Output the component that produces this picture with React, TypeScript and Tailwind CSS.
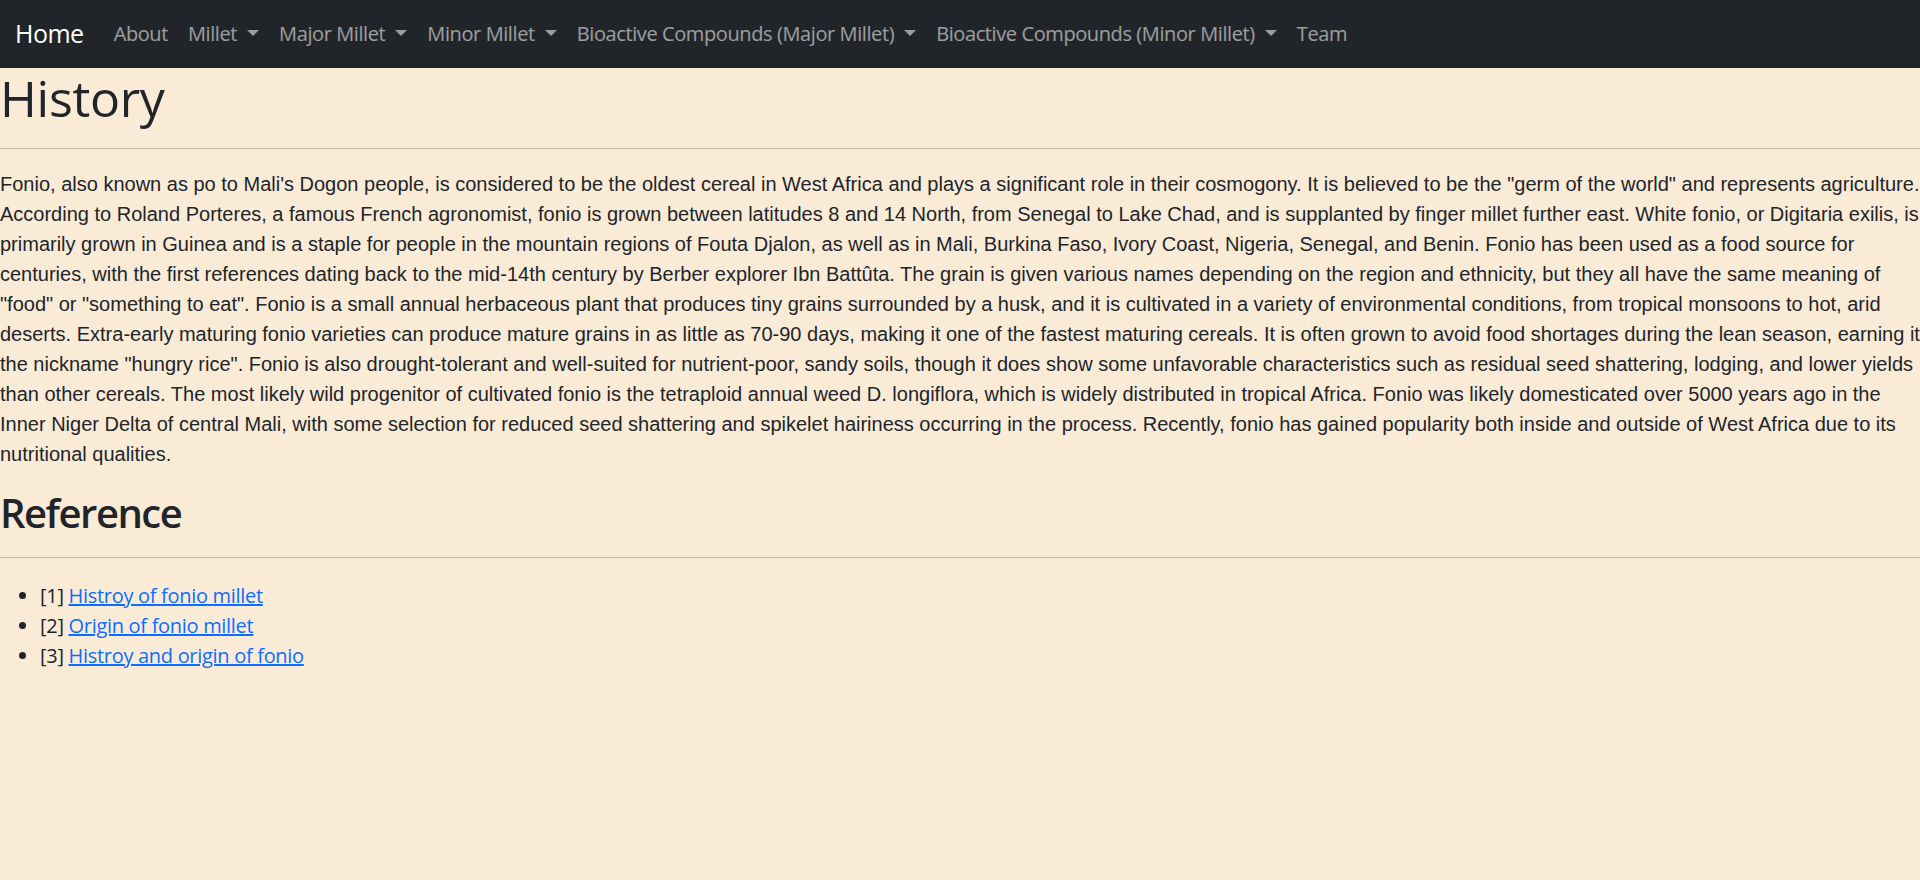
const navItems = [
  { label: "About", dropdown: false },
  { label: "Millet", dropdown: true },
  { label: "Major Millet", dropdown: true },
  { label: "Minor Millet", dropdown: true },
  { label: "Bioactive Compounds (Major Millet)", dropdown: true },
  { label: "Bioactive Compounds (Minor Millet)", dropdown: true },
  { label: "Team", dropdown: false },
];

const references = [
  { id: 1, title: "Histroy of fonio millet" },
  { id: 2, title: "Origin of fonio millet" },
  { id: 3, title: "Histroy and origin of fonio" },
];

const Caret = () => (
  <span className="inline-block ml-[10px] align-[5px] w-0 h-0 border-t-[6px] border-x-[6px] border-b-0 border-t-current border-x-transparent" />
);

const App = () => {
  return (
    <div className="min-h-screen bg-[#faebd7] text-[#212529] font-['Open_Sans',sans-serif] overflow-x-hidden">
      <nav className="h-[68px] bg-[#212529] flex items-center px-[15px]">
        <a href="#" className="text-[25px] leading-[1.5] tracking-[-0.5px] text-white mr-[20px] py-[6px]">
          Home
        </a>
        <ul className="flex items-center">
          {navItems.map(item => (
            <li key={item.label}>
              <a href="#" className="block px-[10px] py-[10px] text-[20px] leading-[30px] tracking-[-0.4px] text-white/55">
                {item.label}
                {item.dropdown && <Caret />}
              </a>
            </li>
          ))}
        </ul>
      </nav>

      <h1 className="text-[50px] leading-[1.2] font-normal tracking-[-0.3px]">History</h1>
      <hr className="my-5 border-[#212529]/25" />
      <p className="font-['Liberation_Sans',Arial,sans-serif] text-[20px] leading-[30px] mb-5">
        Fonio, also known as po to Mali's Dogon people, is considered to be the oldest cereal in West Africa and plays a significant role in their cosmogony. It is believed to be the "germ of the world" and represents agriculture. According to Roland Porteres, a famous French agronomist, fonio is grown between latitudes 8 and 14 North, from Senegal to Lake Chad, and is supplanted by finger millet further east. White fonio, or Digitaria exilis, is primarily grown in Guinea and is a staple for people in the mountain regions of Fouta Djalon, as well as in Mali, Burkina Faso, Ivory Coast, Nigeria, Senegal, and Benin. Fonio has been used as a food source for centuries, with the first references dating back to the mid-14th century by Berber explorer Ibn Battûta. The grain is given various names depending on the region and ethnicity, but they all have the same meaning of "food" or "something to eat". Fonio is a small annual herbaceous plant that produces tiny grains surrounded by a husk, and it is cultivated in a variety of environmental conditions, from tropical monsoons to hot, arid deserts. Extra-early maturing fonio varieties can produce mature grains in as little as 70-90 days, making it one of the fastest maturing cereals. It is often grown to avoid food shortages during the lean season, earning it the nickname "hungry rice". Fonio is also drought-tolerant and well-suited for nutrient-poor, sandy soils, though it does show some unfavorable characteristics such as residual seed shattering, lodging, and lower yields than other cereals. The most likely wild progenitor of cultivated fonio is the tetraploid annual weed D. longiflora, which is widely distributed in tropical Africa. Fonio was likely domesticated over 5000 years ago in the Inner Niger Delta of central Mali, with some selection for reduced seed shattering and spikelet hairiness occurring in the process. Recently, fonio has gained popularity both inside and outside of West Africa due to its nutritional qualities.
      </p>

      <h2 className="text-[40px] leading-[1.2] font-semibold tracking-[-1.5px]">Reference</h2>
      <hr className="my-5 border-[#212529]/25" />
      <ul className="list-disc pl-10 pt-[3px] text-[20px] leading-[30px] tracking-[-0.3px] mb-5">
        {references.map(ref => (
          <li key={ref.id}>
            [{ref.id}]{" "}
            <a href="#" className="text-[#0d6efd] underline">
              {ref.title}
            </a>
          </li>
        ))}
      </ul>
    </div>
  );
};

export default App;
